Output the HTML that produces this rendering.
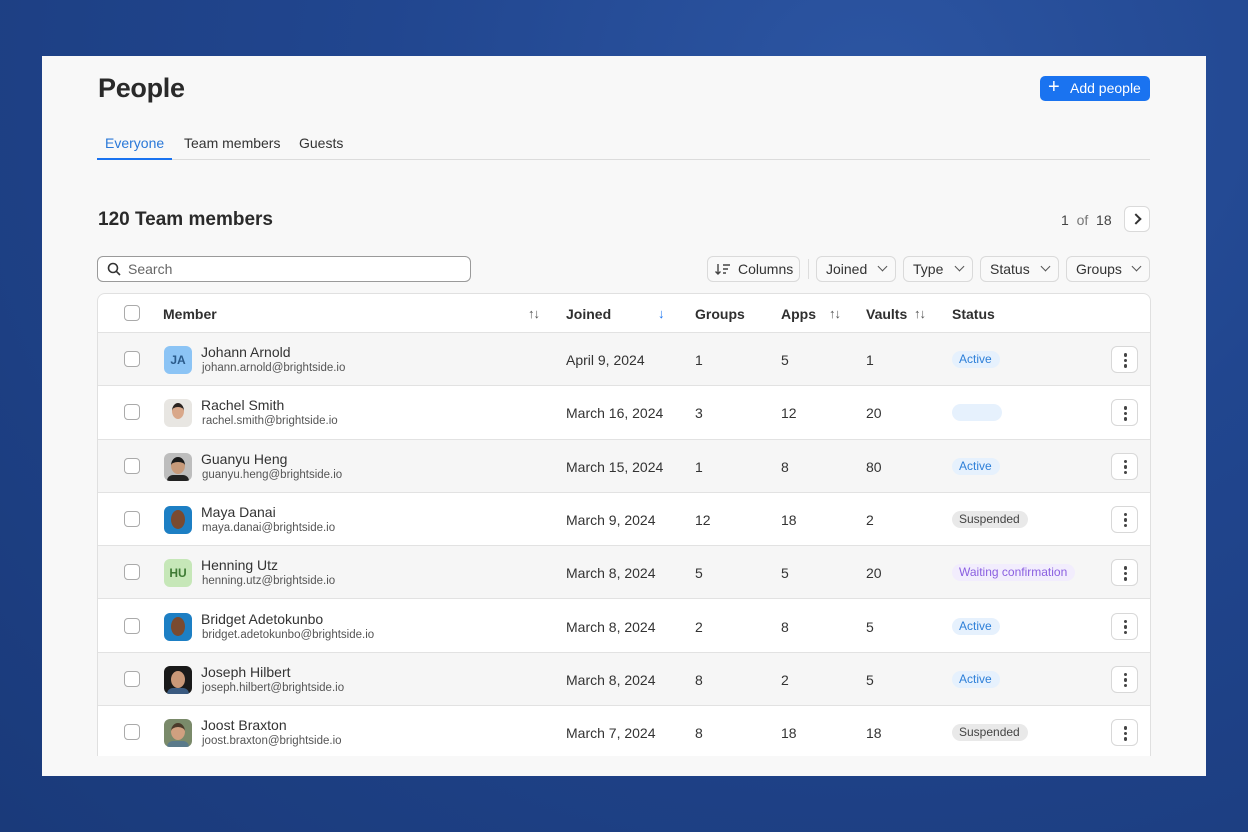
<!DOCTYPE html><html><head><meta charset="utf-8"><style>
*{box-sizing:border-box;margin:0;padding:0}
body{width:1248px;height:832px;overflow:hidden;background:radial-gradient(ellipse at 70% 10%,#2c55a2 0%,#21468f 40%,#1a3a7a 100%);font-family:"Liberation Sans",sans-serif;color:#2b2b2b;position:relative}
.panel{position:absolute;left:42px;top:56px;width:1164px;height:720px;background:#f8f8f8;overflow:hidden}
.a{position:absolute}
h1{position:absolute;left:56px;top:17px;font-size:27px;font-weight:bold;color:#2a2a2a;letter-spacing:-0.3px}
.add{position:absolute;left:998px;top:20px;width:110px;height:25px;background:#1a73f0;border-radius:5px;color:#fff;font-size:14px;line-height:25px;padding-left:30px}
.add:before{content:"+";position:absolute;left:8px;top:-1px;font-size:20px}
.tabs{position:absolute;left:55px;top:103px;width:1053px;border-bottom:1px solid #dcdcdc;height:1px}
.tab{position:absolute;top:79px;font-size:14px;color:#333}
.btn{position:absolute;top:200px;height:26px;border:1px solid #dadada;border-radius:6px;background:#f9f9f9;font-size:14px;color:#333;line-height:24px;padding-left:9px}
.btn .ch{position:absolute;right:9px;top:6px;width:7px;height:7px;border-right:1.5px solid #555;border-bottom:1.5px solid #555;transform:rotate(45deg)}
.table{position:absolute;left:55px;top:237px;width:1054px;height:463px;border:1px solid #e0e0e0;border-bottom:none;border-radius:8px 8px 0 0;background:#fff;overflow:hidden}
.hd{position:absolute;top:0;left:0;right:0;height:39px;border-bottom:1px solid #e2e2e2;font-size:14px;font-weight:bold;color:#2f2f2f}
.hd span{position:absolute;top:12px}
.row{position:absolute;left:0;right:0;height:53.3px;border-bottom:1px solid #e2e2e2;font-size:14px;color:#333}
.row.g{background:#f6f6f6}
.cb{position:absolute;left:26px;width:16px;height:16px;border:1.3px solid #aaa;border-radius:4px;background:#fff}
.row .cb{top:18px}
.av{position:absolute;left:66px;top:13px;width:28px;height:28px;border-radius:6px;overflow:hidden;font-size:12px;font-weight:bold;text-align:center;line-height:28px}
.nm{position:absolute;left:103px;top:11px;font-size:14px;color:#333}
.em{position:absolute;left:104px;top:29px;font-size:11.5px;color:#555}
.c{position:absolute;top:19px}
.st{position:absolute;left:854px;top:18px;height:17px;border-radius:9px;font-size:12px;line-height:17px;padding:0 8px 0 7px}
.act{background:#e6f1fd;color:#2d7fd8}
.sus{background:#e9e9e9;color:#444}
.wait{background:#f2edfd;color:#8a5fe0}
.mn{position:absolute;left:1013px;top:13px;width:27px;height:27px;border:1px solid #d8d8d8;border-radius:6px;background:#fff}
.mn i{position:absolute;left:11.5px;width:3.5px;height:3.5px;border-radius:50%;background:#444}
.sort{position:absolute;top:12px;font-size:13px;font-weight:normal;color:#555;letter-spacing:-1px}
</style></head><body>
<div class="panel">
<h1>People</h1>
<div class="add">Add people</div>
<div class="tab" style="left:63px;color:#2a78d8">Everyone</div>
<div class="tab" style="left:142px">Team members</div>
<div class="tab" style="left:257px">Guests</div>
<div class="tabs"></div>
<div class="a" style="left:55px;top:102px;width:75px;height:2px;background:#1a73f0"></div>
<div class="a" style="left:56px;top:153px;font-size:19px;font-weight:bold;color:#2a2a2a">120 Team members</div>
<div class="a" style="left:1019px;top:156px;font-size:14px;color:#444">1 &nbsp;<span style="color:#777">of</span>&nbsp; 18</div>
<div class="a" style="left:1082px;top:150px;width:26px;height:26px;border:1px solid #dadada;border-radius:6px;background:#fff"><div class="a" style="left:7px;top:8px;width:8px;height:8px;border-right:2px solid #333;border-top:2px solid #333;transform:rotate(45deg)"></div></div>
<div class="a" style="left:55px;top:200px;width:374px;height:26px;border:1px solid #9a9a9a;border-radius:6px;background:#fff;font-size:14px;color:#666;line-height:24px;padding-left:30px">Search
<svg class="a" style="left:9px;top:5px" width="14" height="14" viewBox="0 0 14 14"><circle cx="6" cy="6" r="4.5" fill="none" stroke="#333" stroke-width="1.6"/><line x1="9.3" y1="9.3" x2="13" y2="13" stroke="#333" stroke-width="1.6"/></svg></div>
<div class="btn" style="left:665px;width:93px;padding-left:30px"><svg class="a" style="left:7px;top:6px" width="16" height="13" viewBox="0 0 16 13"><path d="M3 1v10M0.5 8.5L3 11l2.5-2.5M8 2h7M8 6h5M8 10h3" fill="none" stroke="#444" stroke-width="1.4"/></svg>Columns</div>
<div class="a" style="left:766px;top:203px;width:1px;height:20px;background:#ddd"></div>
<div class="btn" style="left:774px;width:80px">Joined<span class="ch"></span></div>
<div class="btn" style="left:861px;width:70px">Type<span class="ch"></span></div>
<div class="btn" style="left:938px;width:79px">Status<span class="ch"></span></div>
<div class="btn" style="left:1024px;width:84px">Groups<span class="ch"></span></div>
<div class="table">
<div class="hd"><div class="cb" style="top:11px"></div>
<span style="left:65px">Member</span><span class="sort" style="left:430px">↑↓</span>
<span style="left:468px">Joined</span><span class="sort" style="left:560px;color:#1a73f0;font-weight:bold">↓</span>
<span style="left:597px">Groups</span>
<span style="left:683px">Apps</span><span class="sort" style="left:731px">↑↓</span>
<span style="left:768px">Vaults</span><span class="sort" style="left:816px">↑↓</span>
<span style="left:854px">Status</span></div>

<div class="row g" style="top:39px"><div class="cb"></div><div class="av" style="background:#8cc4f5;color:#2a5a8a">JA</div><div class="nm">Johann Arnold</div><div class="em">johann.arnold@brightside.io</div><div class="c" style="left:468px">April 9, 2024</div><div class="c" style="left:597px">1</div><div class="c" style="left:683px">5</div><div class="c" style="left:768px">1</div><div class="st act">Active</div><div class="mn"><i style="top:6px"></i><i style="top:11.5px"></i><i style="top:17px"></i></div></div>

<div class="row" style="top:92.3px"><div class="cb"></div><div class="av" style="background:#e8e6e2"><div class="a" style="left:8px;top:4px;width:12px;height:16px;border-radius:50%;background:#d9a88a;border-top:4px solid #2a2320"></div></div><div class="nm">Rachel Smith</div><div class="em">rachel.smith@brightside.io</div><div class="c" style="left:468px">March 16, 2024</div><div class="c" style="left:597px">3</div><div class="c" style="left:683px">12</div><div class="c" style="left:768px">20</div><div class="st act" style="width:50px"></div><div class="mn"><i style="top:6px"></i><i style="top:11.5px"></i><i style="top:17px"></i></div></div>

<div class="row g" style="top:145.6px"><div class="cb"></div><div class="av" style="background:#bdbdbd"><div class="a" style="left:7px;top:4px;width:14px;height:17px;border-radius:50%;background:#c79a7a;border-top:5px solid #1a1a1a"></div><div class="a" style="left:3px;top:22px;width:22px;height:8px;background:#222;border-radius:6px 6px 0 0"></div></div><div class="nm">Guanyu Heng</div><div class="em">guanyu.heng@brightside.io</div><div class="c" style="left:468px">March 15, 2024</div><div class="c" style="left:597px">1</div><div class="c" style="left:683px">8</div><div class="c" style="left:768px">80</div><div class="st act">Active</div><div class="mn"><i style="top:6px"></i><i style="top:11.5px"></i><i style="top:17px"></i></div></div>

<div class="row" style="top:198.9px"><div class="cb"></div><div class="av" style="background:#1d7fc4"><div class="a" style="left:7px;top:4px;width:14px;height:19px;border-radius:50%;background:#7a4a30"></div></div><div class="nm">Maya Danai</div><div class="em">maya.danai@brightside.io</div><div class="c" style="left:468px">March 9, 2024</div><div class="c" style="left:597px">12</div><div class="c" style="left:683px">18</div><div class="c" style="left:768px">2</div><div class="st sus">Suspended</div><div class="mn"><i style="top:6px"></i><i style="top:11.5px"></i><i style="top:17px"></i></div></div>

<div class="row g" style="top:252.2px"><div class="cb"></div><div class="av" style="background:#c6e7b8;color:#3e7a34">HU</div><div class="nm">Henning Utz</div><div class="em">henning.utz@brightside.io</div><div class="c" style="left:468px">March 8, 2024</div><div class="c" style="left:597px">5</div><div class="c" style="left:683px">5</div><div class="c" style="left:768px">20</div><div class="st wait">Waiting confirmation</div><div class="mn"><i style="top:6px"></i><i style="top:11.5px"></i><i style="top:17px"></i></div></div>

<div class="row" style="top:305.5px"><div class="cb"></div><div class="av" style="background:#1d7fc4"><div class="a" style="left:7px;top:4px;width:14px;height:19px;border-radius:50%;background:#7a4a30"></div></div><div class="nm">Bridget Adetokunbo</div><div class="em">bridget.adetokunbo@brightside.io</div><div class="c" style="left:468px">March 8, 2024</div><div class="c" style="left:597px">2</div><div class="c" style="left:683px">8</div><div class="c" style="left:768px">5</div><div class="st act">Active</div><div class="mn"><i style="top:6px"></i><i style="top:11.5px"></i><i style="top:17px"></i></div></div>

<div class="row g" style="top:358.8px"><div class="cb"></div><div class="av" style="background:#1a1a1a"><div class="a" style="left:7px;top:5px;width:14px;height:17px;border-radius:50%;background:#c99878"></div><div class="a" style="left:3px;top:22px;width:22px;height:8px;background:#3a5a80;border-radius:6px 6px 0 0"></div></div><div class="nm">Joseph Hilbert</div><div class="em">joseph.hilbert@brightside.io</div><div class="c" style="left:468px">March 8, 2024</div><div class="c" style="left:597px">8</div><div class="c" style="left:683px">2</div><div class="c" style="left:768px">5</div><div class="st act">Active</div><div class="mn"><i style="top:6px"></i><i style="top:11.5px"></i><i style="top:17px"></i></div></div>

<div class="row" style="top:412.1px;border-bottom:none"><div class="cb"></div><div class="av" style="background:#7a8a6a"><div class="a" style="left:7px;top:4px;width:14px;height:17px;border-radius:50%;background:#d0a080;border-top:4px solid #4a3a2a"></div><div class="a" style="left:3px;top:22px;width:22px;height:8px;background:#5a7a8a;border-radius:6px 6px 0 0"></div></div><div class="nm">Joost Braxton</div><div class="em">joost.braxton@brightside.io</div><div class="c" style="left:468px">March 7, 2024</div><div class="c" style="left:597px">8</div><div class="c" style="left:683px">18</div><div class="c" style="left:768px">18</div><div class="st sus">Suspended</div><div class="mn"><i style="top:6px"></i><i style="top:11.5px"></i><i style="top:17px"></i></div></div>
</div>
</div>
</body></html>
